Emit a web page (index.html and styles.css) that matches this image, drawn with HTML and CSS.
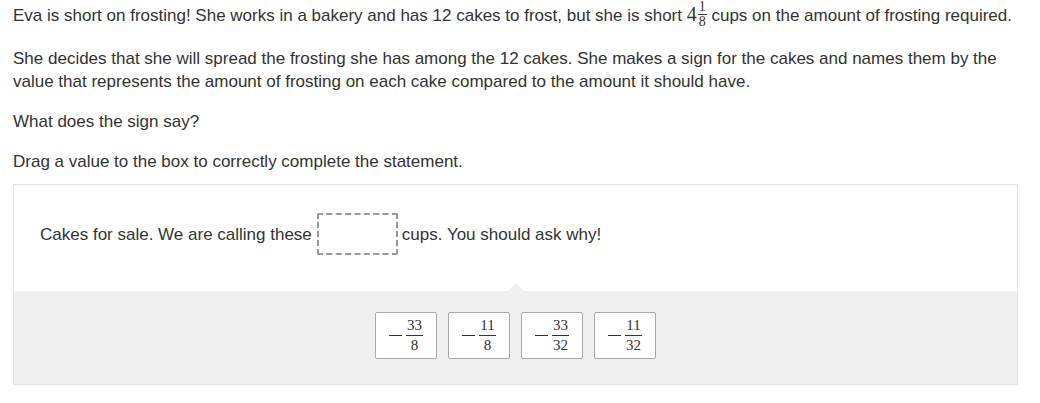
FILE: index.html
```html
<!DOCTYPE html>
<html>
<head>
<meta charset="utf-8">
<link rel="stylesheet" href="styles.css">
</head>
<body>
<div class="page">
  <p class="para first">Eva is short on frosting! She works in a bakery and has 12 cakes to frost, but she is short <span class="math mixed">4<span class="frac small"><span class="num">1</span><span class="den">8</span></span></span> cups on the amount of frosting required.</p>
  <p class="para">She decides that she will spread the frosting she has among the 12 cakes. She makes a sign for the cakes and names them by the value that represents the amount of frosting on each cake compared to the amount it should have.</p>
  <p class="para">What does the sign say?</p>
  <p class="para last">Drag a value to the box to correctly complete the statement.</p>

  <div class="widget">
    <div class="statement">
      <span>Cakes for sale. We are calling these</span>
      <span class="drop"></span>
      <span>cups. You should ask why!</span>
    </div>
    <div class="tray">
      <div class="tile"><span class="math"><span class="minus"></span><span class="frac"><span class="num">33</span><span class="den">8</span></span></span></div>
      <div class="tile"><span class="math"><span class="minus"></span><span class="frac"><span class="num">11</span><span class="den">8</span></span></span></div>
      <div class="tile"><span class="math"><span class="minus"></span><span class="frac"><span class="num">33</span><span class="den">32</span></span></span></div>
      <div class="tile"><span class="math"><span class="minus"></span><span class="frac"><span class="num">11</span><span class="den">32</span></span></span></div>
    </div>
  </div>
</div>
</body>
</html>
```

FILE: styles.css
```css
html, body {
  margin: 0;
  padding: 0;
  background: #fff;
}

.page {
  padding: 2px 22px 0 13px;
  font-family: "Liberation Sans", Arial, sans-serif;
  font-size: 17px;
  color: #333;
  line-height: 23px;
}

.para {
  margin: 0 0 17px;
}

.para.first {
  margin-bottom: 16px;
}

.para.last {
  margin-bottom: 11px;
}

.math {
  font-family: "Liberation Serif", "DejaVu Serif", serif;
  display: inline-flex;
  align-items: center;
  vertical-align: middle;
}

.mixed {
  font-size: 20px;
  position: relative;
  top: -2px;
}

.frac {
  display: inline-flex;
  flex-direction: column;
  align-items: center;
  margin-left: 1px;
}

.frac .num {
  border-bottom: 1px solid #333;
  padding: 0 1px;
}

.frac .num,
.frac .den {
  line-height: 1;
}

.frac.small {
  font-size: 14px;
}

.widget {
  border: 1px solid #e4e4e4;
}

.statement {
  height: 106px;
  box-sizing: border-box;
  padding: 0 0 8px 26px;
  display: flex;
  align-items: center;
  background: #fff;
}

.drop {
  width: 81px;
  height: 42px;
  border: 2px dashed #999;
  border-radius: 2px;
  margin: 0 4px 0 5px;
  box-sizing: border-box;
}

.tray {
  position: relative;
  background: #efefef;
  display: flex;
  justify-content: center;
  gap: 11px;
  padding: 21px 0 25px;
}

.tray::before {
  content: "";
  position: absolute;
  left: 50%;
  top: -8px;
  margin-left: -8px;
  border-left: 8px solid transparent;
  border-right: 8px solid transparent;
  border-bottom: 8px solid #efefef;
}

.tile {
  width: 62px;
  height: 47px;
  box-sizing: border-box;
  background: #fff;
  border: 1px solid #a9a9a9;
  border-radius: 2px;
  display: flex;
  align-items: center;
  justify-content: center;
  color: #333;
}

.tile .math {
  font-size: 15px;
}

.tile .minus {
  display: inline-block;
  width: 13px;
  height: 1px;
  background: #333;
  margin-right: 3px;
}

.tile .frac .num {
  padding: 0 1px 2px;
  border-bottom-color: #333;
}

.tile .frac .den {
  padding-top: 2px;
}
```
